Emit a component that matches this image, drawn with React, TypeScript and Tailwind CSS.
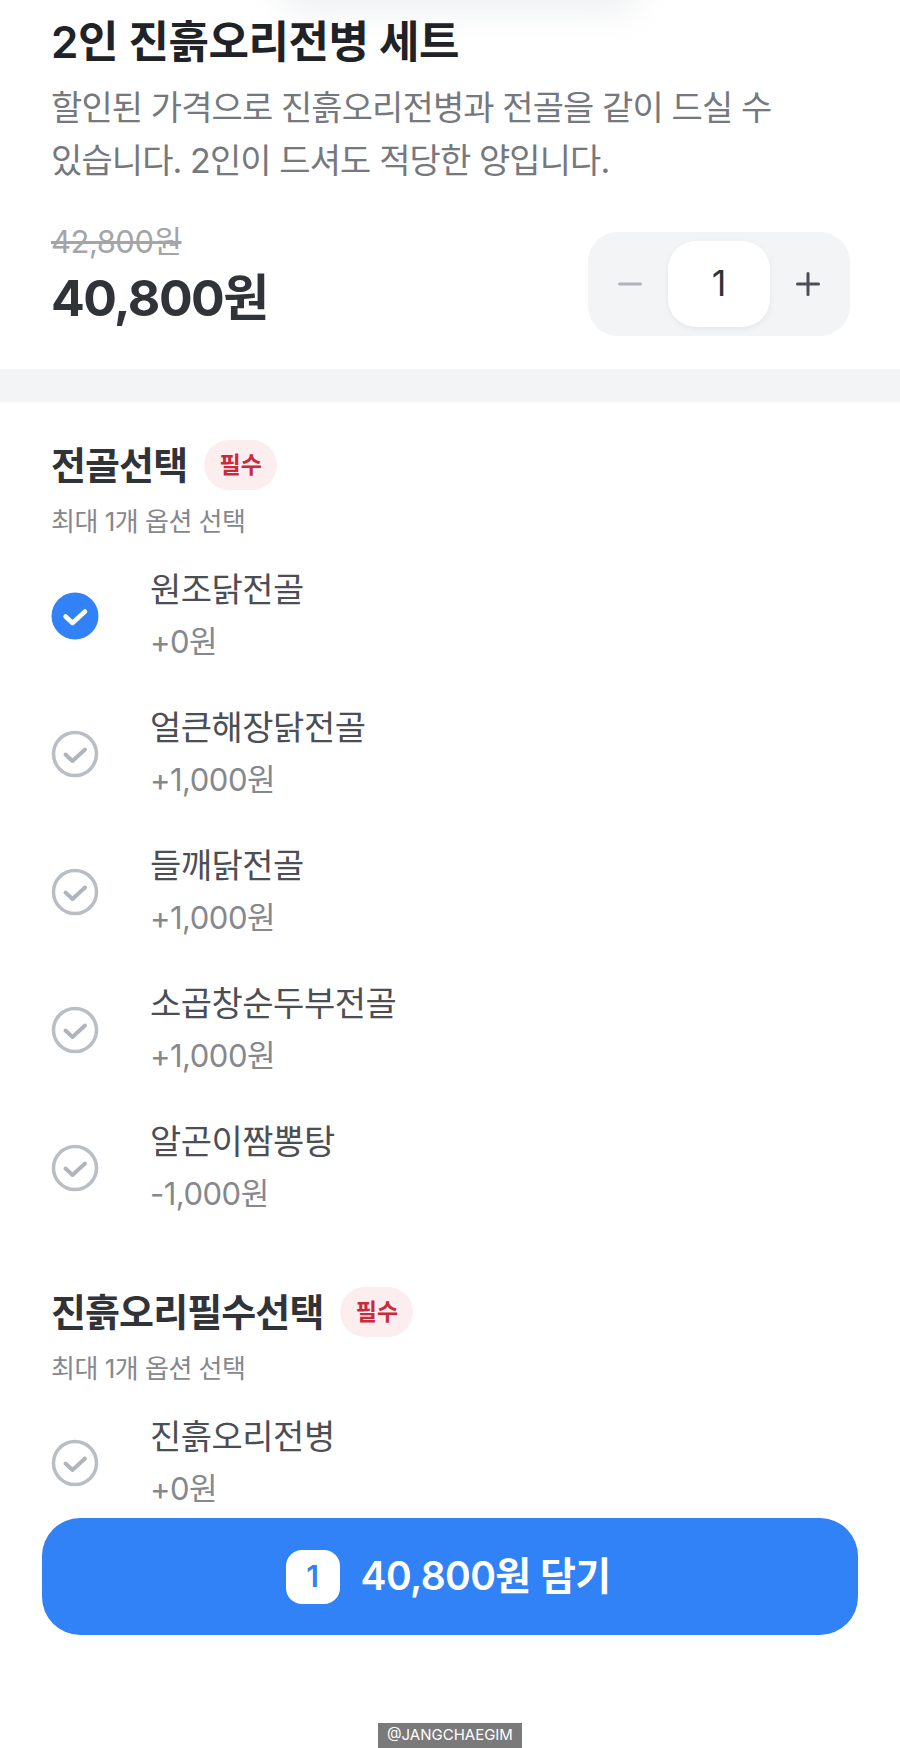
import { Minus, Plus } from "lucide-react";

const mains = [
  { name: "원조닭전골", price: "+0원", checked: true },
  { name: "얼큰해장닭전골", price: "+1,000원" },
  { name: "들깨닭전골", price: "+1,000원" },
  { name: "소곱창순두부전골", price: "+1,000원" },
  { name: "알곤이짬뽕탕", price: "-1,000원" },
];

function CheckMark({ checked }: { checked?: boolean }) {
  return (
    <svg width="48" height="48" viewBox="0 0 48 48" className="shrink-0">
      {checked ? (
        <>
          <circle cx="24" cy="24" r="23.5" fill="#3182f6" />
          <path d="M14.5 24.5l7 6.5 12.5-11.5" fill="none" stroke="#fff" strokeWidth="4.5" strokeLinecap="round" strokeLinejoin="round" />
        </>
      ) : (
        <>
          <circle cx="24" cy="24" r="21.5" fill="#fff" stroke="#b9bec5" strokeWidth="3.5" />
          <path d="M14.5 24.5l7 6.5 12.5-11.5" fill="none" stroke="#b0b5bc" strokeWidth="4" strokeLinecap="round" strokeLinejoin="round" />
        </>
      )}
    </svg>
  );
}

function OptionRow({ name, price, checked }: { name: string; price: string; checked?: boolean }) {
  return (
    <div className="flex h-[138px] items-center pl-[51px]">
      <CheckMark checked={checked} />
      <div className="ml-[51px] flex flex-col">
        <span className="h-[52px] text-[34px] leading-[52px] tracking-[-0.5px] text-[#4b4e54]">{name}</span>
        <span className="text-[31px] leading-[52px] tracking-[-0.5px] text-[#85888d]">{price}</span>
      </div>
    </div>
  );
}

function GroupHeader({ title }: { title: string }) {
  return (
    <>
      <div className="flex h-[50px] items-center pl-[51px]">
        <h2 className="text-[38px] font-bold tracking-[-0.9px] text-[#303338]">{title}</h2>
        <span className="ml-[17px] flex h-[50px] w-[73px] items-center justify-center rounded-full bg-[#fceeef] text-[23px] font-semibold text-[#c92a3c]">
          필수
        </span>
      </div>
      <p className="mt-[16px] pl-[51px] text-[26px] leading-[32px] tracking-[-0.5px] text-[#85888d]">최대 1개 옵션 선택</p>
    </>
  );
}

export default function App() {
  return (
    <div
      className="relative h-[1748px] w-[900px] overflow-hidden bg-white"
      style={{ fontFamily: 'Inter, "Noto Sans CJK KR", sans-serif' }}
    >
      <div className="absolute left-[280px] top-[-30px] h-[40px] w-[360px] rounded-full bg-[#eceef0] blur-[18px]" />

      <div className="relative px-[51px] pt-[14px]">
        <h1 className="text-[44px] font-semibold leading-[56px] tracking-[-0.5px] text-[#1f2226]">2인 진흙오리전병 세트</h1>
        <p className="mt-[11px] w-[760px] break-keep text-[34px] leading-[53px] tracking-[-0.9px] text-[#75787d]">
          할인된 가격으로 진흙오리전병과 전골을 같이 드실 수 있습니다. 2인이 드셔도 적당한 양입니다.
        </p>
      </div>

      <div className="mt-[37px] flex items-start justify-between pl-[51px] pr-[50px]">
        <div className="flex flex-col">
          <span className="text-[31px] leading-[36px] tracking-[-0.5px] text-[#a3a5a8] line-through">42,800원</span>
          <span className="mt-[9px] text-[50px] font-bold leading-[59px] tracking-[-1.5px] text-[#303338]">40,800원</span>
        </div>
        <div className="mt-[8px] flex h-[104px] w-[262px] items-center rounded-[30px] bg-[#f2f4f6] px-[24px]">
          <Minus size={36} strokeWidth={2} className="shrink-0 text-[#b0b3b8]" />
          <div className="ml-[20px] flex h-[86px] w-[102px] shrink-0 items-center justify-center rounded-[28px] bg-white pb-[2px] text-[36px] text-[#303338] shadow-[0_2px_6px_rgba(0,0,0,0.06)]">
            1
          </div>
          <Plus size={36} strokeWidth={2} className="ml-auto shrink-0 text-[#4b4e54]" />
        </div>
      </div>

      <div className="mt-[33px] h-[33px] bg-[#f2f4f6]" />

      <div className="pt-[38px]">
        <GroupHeader title="전골선택" />
        <div className="mt-[9px]">
          {mains.map((m) => (
            <OptionRow key={m.name} name={m.name} price={m.price} checked={m.checked} />
          ))}
        </div>
      </div>

      <div className="pt-[50px]">
        <GroupHeader title="진흙오리필수선택" />
        <div className="mt-[9px]">
          <OptionRow name="진흙오리전병" price="+0원" />
        </div>
      </div>

      <div className="absolute left-[42px] top-[1518px] flex h-[117px] w-[816px] items-center justify-center rounded-[38px] bg-[#3182f6]">
        <span className="flex h-[54px] w-[54px] items-center justify-center rounded-[16px] bg-white text-[30px] font-semibold text-[#3182f6]">
          1
        </span>
        <span className="ml-[21px] mr-[4px] text-[39px] font-semibold tracking-[-0.6px] text-white">40,800원 담기</span>
      </div>

      <div className="absolute bottom-0 left-[378px] flex h-[25px] w-[144px] items-center justify-center bg-[#7a7a7a] text-[15px] text-white">
        @JANGCHAEGIM
      </div>
    </div>
  );
}
